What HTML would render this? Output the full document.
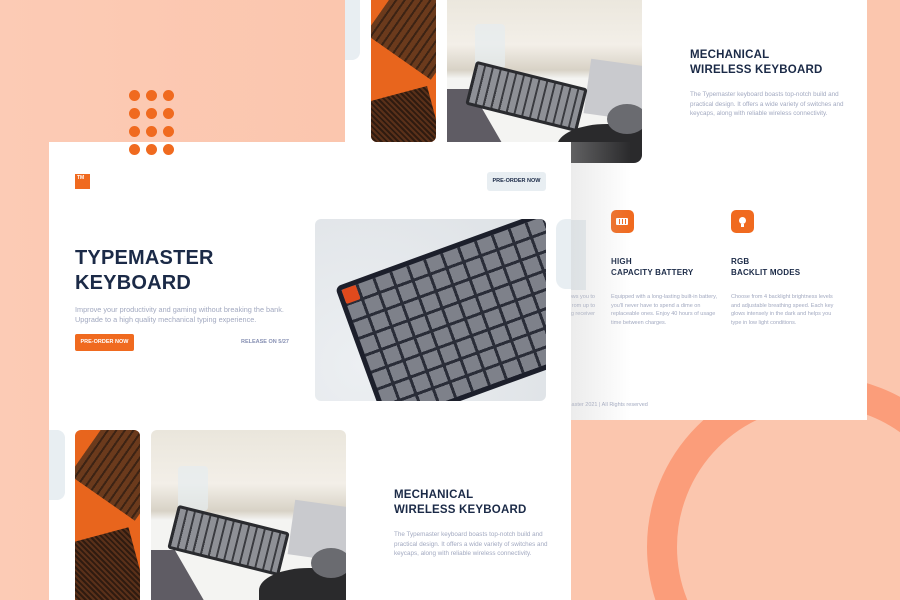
<!DOCTYPE html>
<html><head><meta charset="utf-8"><style>
*{margin:0;padding:0;box-sizing:border-box}
html,body{width:900px;height:600px;overflow:hidden}
body{background:#fbc6ae;font-family:"Liberation Sans",sans-serif}
#wrap{position:relative;width:900px;height:600px;overflow:hidden;background:#fbc6ae}
.abs{position:absolute}
.page{position:absolute;background:#fff;overflow:hidden}
.h{color:#1b2a47;font-weight:bold;letter-spacing:.2px}
.p{color:#a2a9c0;font-size:6.3px;line-height:9.5px}
.ring{position:absolute;left:647px;top:376px;width:342px;height:342px;border-radius:50%;border:30px solid #fb9d7a}
.dot{position:absolute;width:11px;height:11px;border-radius:50%;background:#f06a1f}
.op{position:absolute;background:#e8651d;overflow:hidden;border-radius:6px}
.dp{position:absolute;overflow:hidden;background:linear-gradient(#eae6dc 0,#f3efe8 30%,#d8d2c6 45%,#f4f4f2 50%)}
.kbk{position:absolute;background:repeating-linear-gradient(90deg,#8e9096 0 6px,#3a3b40 6px 8px),#2f3034;border:3px solid #2a2b2f;border-radius:3px}
</style></head><body><div id="wrap">
<div class="abs" style="left:0;top:0;width:345px;height:600px;background:linear-gradient(90deg,#fccbb5,#fbc6ae)"></div>
<div class="ring"></div>

<div class="page" style="left:345px;top:0;width:522px;height:420px">
  <div class="abs" style="left:0;top:0;width:15px;height:60px;background:#e8eef2;border-radius:0 0 8px 0"></div>
  <div class="op" style="left:26px;top:-6px;width:65px;height:148px">
    <div class="abs" style="left:10px;top:-10px;width:80px;height:80px;transform:rotate(35deg);background:repeating-linear-gradient(90deg,#6b3a1c 0 5px,#3c2314 5px 7px)"></div>
    <div class="abs" style="left:-5px;top:100px;width:70px;height:60px;transform:rotate(-15deg);background:repeating-linear-gradient(60deg,#5a3019 0 2px,#2f1b10 2px 4px)"></div>
  </div>
  <div class="dp" style="left:102px;top:-6px;width:195px;height:169px;border-radius:0 0 8px 8px">
    <div class="abs" style="left:-40px;top:95px;width:110px;height:80px;background:#5f5c64;transform:skewX(30deg);transform-origin:0 100%"></div>
    <div class="abs" style="left:28px;top:30px;width:30px;height:45px;background:rgba(230,236,240,.7);border-radius:4px"></div>
    <div class="abs" style="left:140px;top:70px;width:80px;height:55px;background:#c9cace;transform:rotate(8deg)"></div>
    <div class="kbk" style="left:22px;top:80px;width:115px;height:45px;transform:rotate(14deg)"></div>
    <div class="abs" style="left:110px;top:130px;width:100px;height:45px;background:#2a2a2c;border-radius:50% 40% 0 0"></div>
    <div class="abs" style="left:160px;top:110px;width:40px;height:30px;background:#6a6b70;border-radius:50%"></div>
  </div>
  <div class="abs h" style="left:345px;top:48px;font-size:11.5px;line-height:14.5px">MECHANICAL<br>WIRELESS KEYBOARD</div>
  <div class="abs p" style="left:345px;top:90px;width:160px">The Typemaster keyboard boasts top-notch build and practical design. It offers a wide variety of switches and keycaps, along with reliable wireless connectivity.</div>
  <div class="abs" style="left:266px;top:210px;width:23px;height:23px;border-radius:5px;background:#f06a1f"><div class="abs" style="left:5px;top:8px;width:12px;height:7px;border:1.5px solid #fff;border-radius:1px;background:repeating-linear-gradient(90deg,#fff 0 2px,#f06a1f 2px 3px)"></div></div>
  <div class="abs" style="left:386px;top:210px;width:23px;height:23px;border-radius:5px;background:#f06a1f"><div class="abs" style="left:8px;top:7px;width:7px;height:7px;border-radius:50%;background:#fff"></div><div class="abs" style="left:10px;top:14px;width:3px;height:3px;background:#fff"></div></div>
  <div class="abs h" style="left:266px;top:256px;font-size:8px;line-height:11px">HIGH<br>CAPACITY BATTERY</div>
  <div class="abs h" style="left:386px;top:256px;font-size:8px;line-height:11px">RGB<br>BACKLIT MODES</div>
  <div class="abs p" style="left:266px;top:293px;width:112px;font-size:5.5px;line-height:8.5px">Equipped with a long-lasting built-in battery, you'll never have to spend a dime on replaceable ones. Enjoy 40 hours of usage time between charges.</div>
  <div class="abs p" style="left:386px;top:293px;width:112px;font-size:5.5px;line-height:8.5px">Choose from 4 backlight brightness levels and adjustable breathing speed. Each key glows intensely in the dark and helps you type in low light conditions.</div>
  <div class="abs p" style="left:190px;top:293px;width:60px;font-size:5.5px;line-height:8.5px;text-align:right">ows you to<br>rom up to<br>ng receiver</div>
  <div class="abs" style="left:211px;top:220px;width:30px;height:70px;background:#e8eef2;border-radius:10px 0 0 10px"></div>
  <div class="abs p" style="left:210px;top:401px;font-size:5.5px">Typemaster 2021 | All Rights reserved</div>
  <div class="abs" style="left:226px;top:142px;width:60px;height:278px;background:linear-gradient(90deg,rgba(200,200,200,.35),rgba(255,255,255,0))"></div>
</div>

<div class="page" style="left:49px;top:142px;width:522px;height:458px">
  <div class="abs" style="left:26px;top:32px;width:15px;height:15px;background:#f06a1f;color:#fff;font-size:5px;font-weight:bold;padding:1px 2px">TM</div>
  <div class="abs" style="left:438px;top:30px;width:59px;height:19px;background:#e8eef2;border-radius:3px;color:#1b2a47;font-size:5.5px;font-weight:bold;text-align:center;line-height:19px">PRE-ORDER NOW</div>
  <div class="abs h" style="left:26px;top:104px;font-size:20px;line-height:25px;font-weight:900">TYPEMASTER<br>KEYBOARD</div>
  <div class="abs p" style="left:26px;top:163px;font-size:7.3px;line-height:9.5px;width:230px">Improve your productivity and gaming without breaking the bank. Upgrade to a high quality mechanical typing experience.</div>
  <div class="abs" style="left:26px;top:192px;width:59px;height:17px;background:#f06a1f;border-radius:2px;color:#fff;font-size:5.5px;font-weight:bold;text-align:center;line-height:17px">PRE-ORDER NOW</div>
  <div class="abs" style="left:192px;top:197px;color:#8790b3;font-size:5.5px;font-weight:bold">RELEASE ON 5/27</div>
  <div class="abs" style="left:266px;top:77px;width:231px;height:182px;border-radius:6px;overflow:hidden;background:radial-gradient(circle at 20% 80%,#eceff2,#dde1e5)">
    <div class="abs" style="left:20px;top:68px;width:240px;height:150px;transform:rotate(-20deg);transform-origin:0 0;background:#1c1f2b;border-radius:6px">
      <div class="abs" style="left:5px;top:5px;right:5px;bottom:5px;background:repeating-linear-gradient(90deg,transparent 0 15px,#2a2d38 15px 18px),repeating-linear-gradient(0deg,#7e818a 0 15px,#2a2d38 15px 18px)"></div>
      <div class="abs" style="left:5px;top:5px;width:15px;height:15px;background:#e04a1d;border-radius:2px"></div>
    </div>
  </div>
  <div class="abs" style="left:507px;top:77px;width:30px;height:70px;background:#e8eef2;border-radius:10px 0 0 10px"></div>
  <div class="abs" style="left:0;top:288px;width:16px;height:70px;background:#e8eef2;border-radius:0 8px 8px 0"></div>
  <div class="op" style="left:26px;top:288px;width:65px;height:180px">
    <div class="abs" style="left:10px;top:-5px;width:80px;height:80px;transform:rotate(35deg);background:repeating-linear-gradient(90deg,#6b3a1c 0 5px,#3c2314 5px 7px)"></div>
    <div class="abs" style="left:-5px;top:105px;width:70px;height:80px;transform:rotate(-15deg);background:repeating-linear-gradient(60deg,#5a3019 0 2px,#2f1b10 2px 4px)"></div>
  </div>
  <div class="dp" style="left:102px;top:288px;width:195px;height:180px;border-radius:6px 6px 0 0">
    <div class="abs" style="left:-40px;top:120px;width:110px;height:80px;background:#5f5c64;transform:skewX(30deg);transform-origin:0 100%"></div>
    <div class="abs" style="left:27px;top:36px;width:30px;height:45px;background:rgba(230,236,240,.7);border-radius:4px"></div>
    <div class="abs" style="left:140px;top:75px;width:80px;height:55px;background:#c9cace;transform:rotate(8deg)"></div>
    <div class="kbk" style="left:20px;top:88px;width:115px;height:45px;transform:rotate(14deg)"></div>
    <div class="abs" style="left:108px;top:138px;width:100px;height:45px;background:#2a2a2c;border-radius:50% 40% 0 0"></div>
    <div class="abs" style="left:160px;top:118px;width:40px;height:30px;background:#6a6b70;border-radius:50%"></div>
  </div>
  <div class="abs h" style="left:345px;top:346px;font-size:11.5px;line-height:14.5px">MECHANICAL<br>WIRELESS KEYBOARD</div>
  <div class="abs p" style="left:345px;top:388px;width:160px">The Typemaster keyboard boasts top-notch build and practical design. It offers a wide variety of switches and keycaps, along with reliable wireless connectivity.</div>
</div>

<div class="dot" style="left:129px;top:90px"></div><div class="dot" style="left:146px;top:90px"></div><div class="dot" style="left:163px;top:90px"></div>
<div class="dot" style="left:129px;top:108px"></div><div class="dot" style="left:146px;top:108px"></div><div class="dot" style="left:163px;top:108px"></div>
<div class="dot" style="left:129px;top:126px"></div><div class="dot" style="left:146px;top:126px"></div><div class="dot" style="left:163px;top:126px"></div>
<div class="dot" style="left:129px;top:144px"></div><div class="dot" style="left:146px;top:144px"></div><div class="dot" style="left:163px;top:144px"></div>
</div></body></html>
